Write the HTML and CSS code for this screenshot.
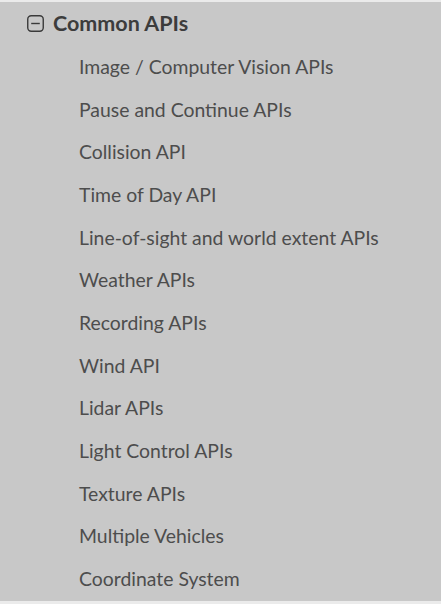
FILE: index.html
```html
<!DOCTYPE html>
<html>
<head>
<meta charset="utf-8">
<link rel="stylesheet" href="styles.css">
</head>
<body>
<div class="panel">
  <div class="head">
    <svg class="toggle" width="17" height="17" viewBox="0 0 17 17"><rect x="0.75" y="0.75" width="15.5" height="15.5" rx="3.5" fill="none" stroke="#3a3a3a" stroke-width="1.4"/><line x1="4.2" y1="8.5" x2="12.8" y2="8.5" stroke="#3a3a3a" stroke-width="1.4"/></svg>
    <span class="title">Common APIs</span>
  </div>
  <ul class="items">
    <li>Image / Computer Vision APIs</li>
    <li>Pause and Continue APIs</li>
    <li>Collision API</li>
    <li>Time of Day API</li>
    <li>Line-of-sight and world extent APIs</li>
    <li>Weather APIs</li>
    <li>Recording APIs</li>
    <li>Wind API</li>
    <li>Lidar APIs</li>
    <li>Light Control APIs</li>
    <li>Texture APIs</li>
    <li>Multiple Vehicles</li>
    <li>Coordinate System</li>
  </ul>
</div>
</body>
</html>
```
FILE: styles.css
```css
html, body {
  margin: 0;
  padding: 0;
  background: #ebebeb;
}
body {
  font-family: Lato, "Open Sans", sans-serif;
  color: #4d4d4d;
}
.panel {
  margin-top: 2px;
  height: 599px;
  background: #c8c8c8;
  box-sizing: border-box;
  padding-top: 8px;
}
.head {
  display: flex;
  align-items: center;
  gap: 9px;
  padding-left: 27px;
  height: 26px;
}
.toggle {
  flex: none;
}
.title {
  font-size: 21.5px;
  font-weight: 700;
  color: #3c3c3c;
}
.items {
  list-style: none;
  margin: 0;
  padding: 10px 0 0 79px;
}
.items li {
  font-size: 19.4px;
  line-height: 26.67px;
  padding: 8px 0;
}
```
